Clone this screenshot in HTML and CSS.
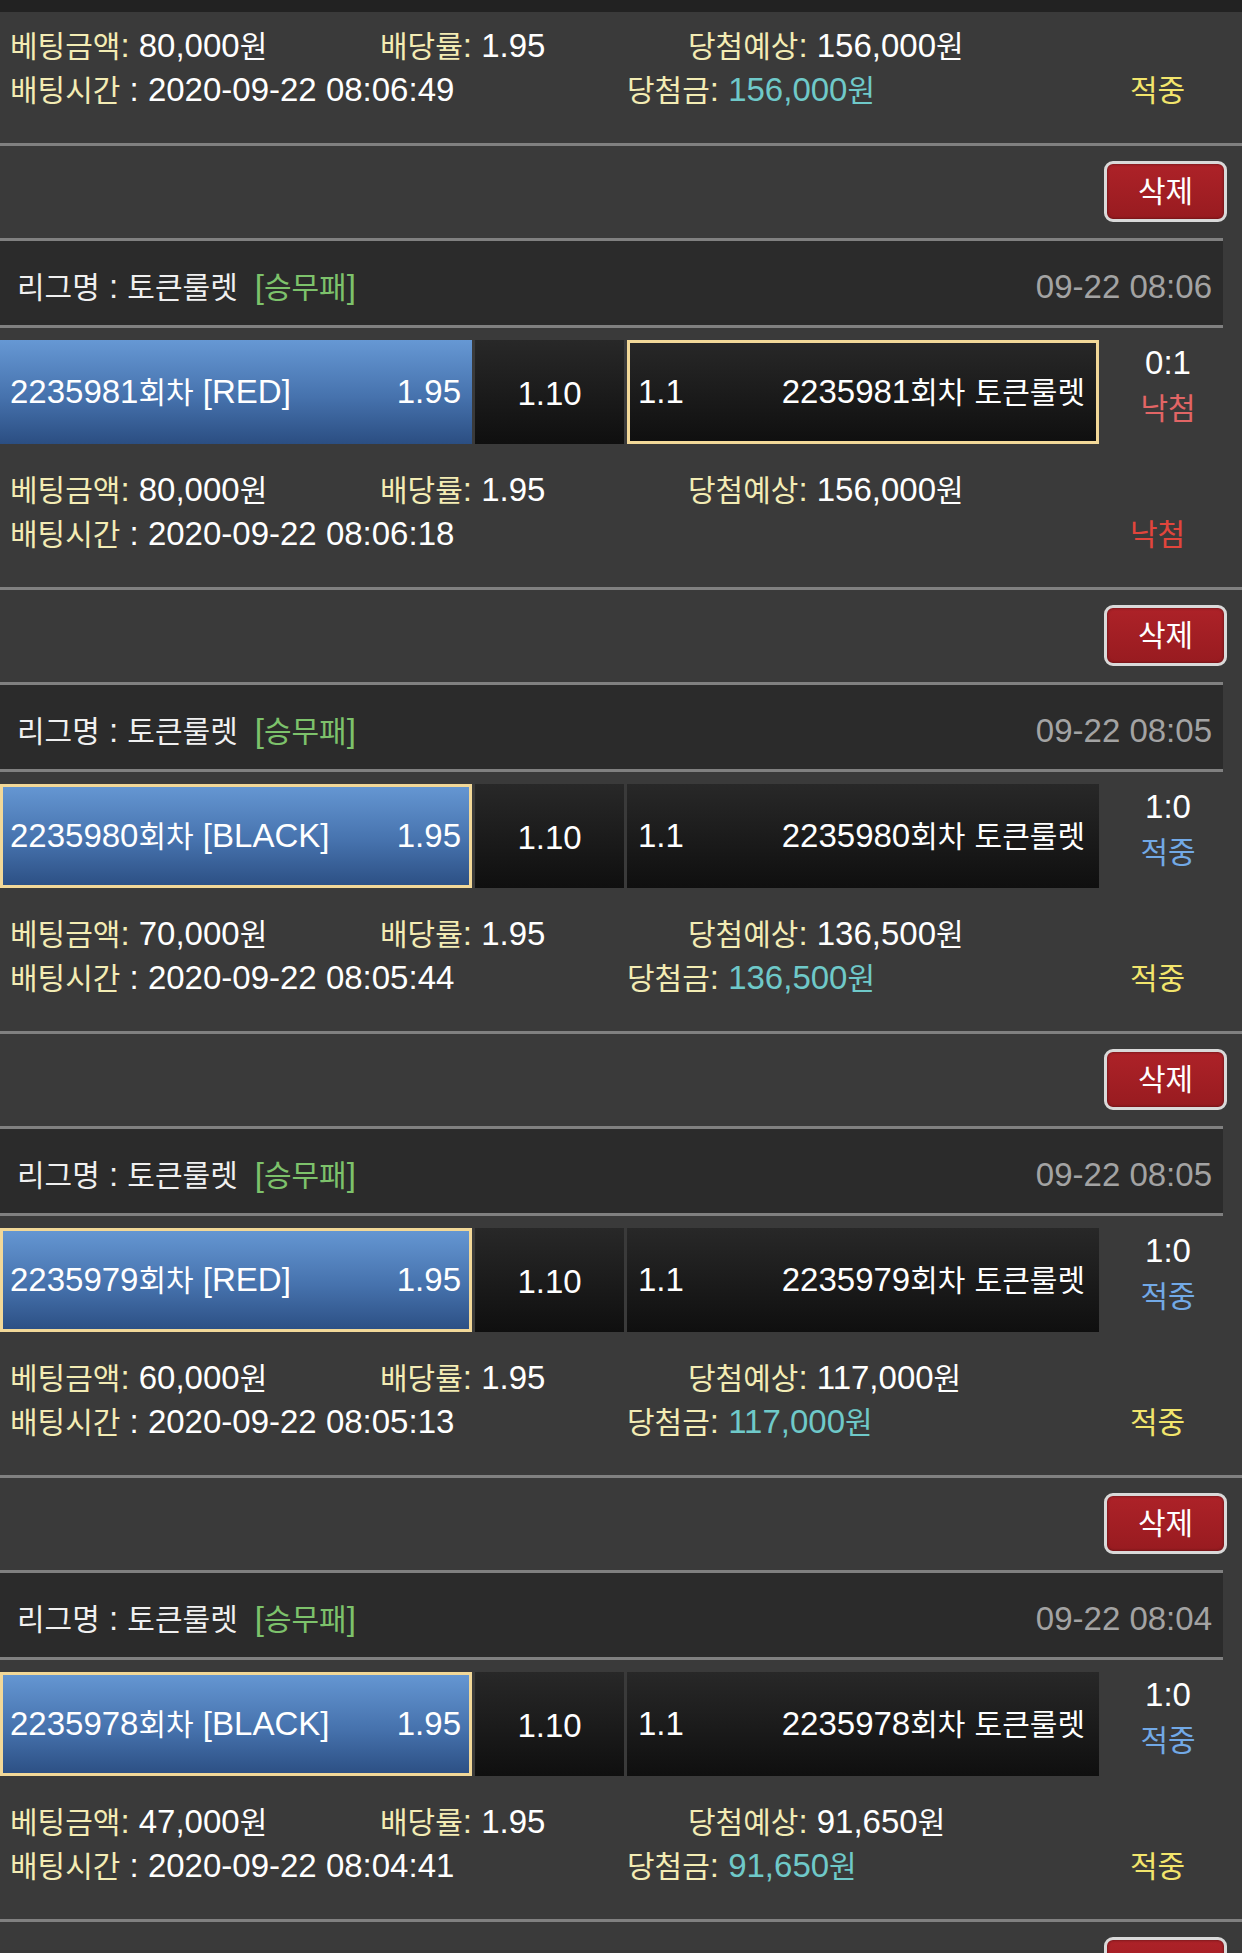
FILE: index.html
```html
<!DOCTYPE html>
<html lang="ko">
<head>
<meta charset="utf-8">
<title>배팅내역</title>
<link rel="stylesheet" href="styles.css">
</head>
<body>
<div class="topbar"></div>

<section class="info info-first">
  <div class="row">
    <div class="c1"><span class="lbl"><span class="k">베팅금액</span>:</span> 80,000<span class="k">원</span></div>
    <div class="c2"><span class="lbl"><span class="k">배당률</span>:</span> 1.95</div>
    <div class="c3"><span class="lbl"><span class="k">당첨예상</span>:</span> 156,000<span class="k">원</span></div>
  </div>
  <div class="row">
    <div class="d1"><span class="lbl"><span class="k">배팅시간</span></span> : 2020-09-22 08:06:49</div>
    <div class="d2"><span class="lbl"><span class="k">당첨금</span>:</span> <span class="win">156,000<span class="k">원</span></span></div>
    <div class="d3"><span class="k st-hit">적중</span></div>
  </div>
</section>

<article class="entry">
  <div class="actions"><button class="del"><span class="k">삭제</span></button></div>
  <div class="league">
    <div class="league-name"><span class="k">리그명</span> : <span class="k">토큰룰렛</span><span class="type">[<span class="k">승무패</span>]</span></div>
    <div class="league-date">09-22 08:06</div>
  </div>
  <div class="bet">
    <div class="pick home"><span>2235981<span class="k">회차</span> [RED]</span><span>1.95</span></div>
    <div class="pick draw">1.10</div>
    <div class="pick away selected"><span>1.1</span><span>2235981<span class="k">회차</span> <span class="k">토큰룰렛</span></span></div>
    <div class="score"><div>0:1</div><div class="k sc-lose">낙첨</div></div>
  </div>
  <div class="info">
    <div class="row">
      <div class="c1"><span class="lbl"><span class="k">베팅금액</span>:</span> 80,000<span class="k">원</span></div>
      <div class="c2"><span class="lbl"><span class="k">배당률</span>:</span> 1.95</div>
      <div class="c3"><span class="lbl"><span class="k">당첨예상</span>:</span> 156,000<span class="k">원</span></div>
    </div>
    <div class="row">
      <div class="d1"><span class="lbl"><span class="k">배팅시간</span></span> : 2020-09-22 08:06:18</div>
      <div class="d2"></div>
      <div class="d3"><span class="k st-lose">낙첨</span></div>
    </div>
  </div>
</article>

<article class="entry">
  <div class="actions"><button class="del"><span class="k">삭제</span></button></div>
  <div class="league">
    <div class="league-name"><span class="k">리그명</span> : <span class="k">토큰룰렛</span><span class="type">[<span class="k">승무패</span>]</span></div>
    <div class="league-date">09-22 08:05</div>
  </div>
  <div class="bet">
    <div class="pick home selected"><span>2235980<span class="k">회차</span> [BLACK]</span><span>1.95</span></div>
    <div class="pick draw">1.10</div>
    <div class="pick away"><span>1.1</span><span>2235980<span class="k">회차</span> <span class="k">토큰룰렛</span></span></div>
    <div class="score"><div>1:0</div><div class="k sc-hit">적중</div></div>
  </div>
  <div class="info">
    <div class="row">
      <div class="c1"><span class="lbl"><span class="k">베팅금액</span>:</span> 70,000<span class="k">원</span></div>
      <div class="c2"><span class="lbl"><span class="k">배당률</span>:</span> 1.95</div>
      <div class="c3"><span class="lbl"><span class="k">당첨예상</span>:</span> 136,500<span class="k">원</span></div>
    </div>
    <div class="row">
      <div class="d1"><span class="lbl"><span class="k">배팅시간</span></span> : 2020-09-22 08:05:44</div>
      <div class="d2"><span class="lbl"><span class="k">당첨금</span>:</span> <span class="win">136,500<span class="k">원</span></span></div>
      <div class="d3"><span class="k st-hit">적중</span></div>
    </div>
  </div>
</article>

<article class="entry">
  <div class="actions"><button class="del"><span class="k">삭제</span></button></div>
  <div class="league">
    <div class="league-name"><span class="k">리그명</span> : <span class="k">토큰룰렛</span><span class="type">[<span class="k">승무패</span>]</span></div>
    <div class="league-date">09-22 08:05</div>
  </div>
  <div class="bet">
    <div class="pick home selected"><span>2235979<span class="k">회차</span> [RED]</span><span>1.95</span></div>
    <div class="pick draw">1.10</div>
    <div class="pick away"><span>1.1</span><span>2235979<span class="k">회차</span> <span class="k">토큰룰렛</span></span></div>
    <div class="score"><div>1:0</div><div class="k sc-hit">적중</div></div>
  </div>
  <div class="info">
    <div class="row">
      <div class="c1"><span class="lbl"><span class="k">베팅금액</span>:</span> 60,000<span class="k">원</span></div>
      <div class="c2"><span class="lbl"><span class="k">배당률</span>:</span> 1.95</div>
      <div class="c3"><span class="lbl"><span class="k">당첨예상</span>:</span> 117,000<span class="k">원</span></div>
    </div>
    <div class="row">
      <div class="d1"><span class="lbl"><span class="k">배팅시간</span></span> : 2020-09-22 08:05:13</div>
      <div class="d2"><span class="lbl"><span class="k">당첨금</span>:</span> <span class="win">117,000<span class="k">원</span></span></div>
      <div class="d3"><span class="k st-hit">적중</span></div>
    </div>
  </div>
</article>

<article class="entry">
  <div class="actions"><button class="del"><span class="k">삭제</span></button></div>
  <div class="league">
    <div class="league-name"><span class="k">리그명</span> : <span class="k">토큰룰렛</span><span class="type">[<span class="k">승무패</span>]</span></div>
    <div class="league-date">09-22 08:04</div>
  </div>
  <div class="bet">
    <div class="pick home selected"><span>2235978<span class="k">회차</span> [BLACK]</span><span>1.95</span></div>
    <div class="pick draw">1.10</div>
    <div class="pick away"><span>1.1</span><span>2235978<span class="k">회차</span> <span class="k">토큰룰렛</span></span></div>
    <div class="score"><div>1:0</div><div class="k sc-hit">적중</div></div>
  </div>
  <div class="info">
    <div class="row">
      <div class="c1"><span class="lbl"><span class="k">베팅금액</span>:</span> 47,000<span class="k">원</span></div>
      <div class="c2"><span class="lbl"><span class="k">배당률</span>:</span> 1.95</div>
      <div class="c3"><span class="lbl"><span class="k">당첨예상</span>:</span> 91,650<span class="k">원</span></div>
    </div>
    <div class="row">
      <div class="d1"><span class="lbl"><span class="k">배팅시간</span></span> : 2020-09-22 08:04:41</div>
      <div class="d2"><span class="lbl"><span class="k">당첨금</span>:</span> <span class="win">91,650<span class="k">원</span></span></div>
      <div class="d3"><span class="k st-hit">적중</span></div>
    </div>
  </div>
</article>

<article class="entry">
  <div class="actions"><button class="del"><span class="k">삭제</span></button></div>
</article>
</body>
</html>
```

FILE: styles.css
```css
* { box-sizing: border-box; }

html, body {
  margin: 0;
  padding: 0;
}

body {
  background: #3a3a3a;
  color: #ffffff;
  font-family: "Liberation Sans", "Noto Sans CJK KR", sans-serif;
  font-size: 33px;
  line-height: 44px;
  overflow: hidden;
}

.k {
  font-size: 30px;
}

.topbar {
  height: 12px;
  background: #222222;
}

/* info block */
.info {
  padding: 24px 0 31px 10px;
}

.info-first {
  padding-top: 12px;
}

.row {
  display: flex;
  height: 44px;
  white-space: nowrap;
}

.c1 { width: 370px; }
.c2 { width: 308px; }
.c3 { flex: 1; }
.d1 { width: 617px; }
.d2 { width: 503px; }
.d3 { flex: 1; }

.lbl { color: #f3ecb4; }
.win { color: #6fc9c9; }
.st-hit { color: #f2e56c; }
.st-lose { color: #e2453c; }

/* entry */
.entry {
  border-top: 3px solid #808080;
}

.actions {
  height: 92px;
  display: flex;
  justify-content: flex-end;
  align-items: flex-start;
  padding: 15px 15px 0 0;
}

.del {
  width: 123px;
  height: 61px;
  margin: 0;
  padding: 0;
  border: 3px solid #d9d9d9;
  border-radius: 9px;
  background: linear-gradient(#ad2228, #981b20);
  box-shadow: inset 0 0 3px rgba(0, 0, 0, 0.5);
  color: #ffffff;
  font-family: inherit;
  line-height: 1;
  display: flex;
  align-items: center;
  justify-content: center;
}

.league {
  width: 1223px;
  height: 90px;
  border-top: 3px solid #808080;
  border-bottom: 3px solid #808080;
  background: #2b2b2b;
  display: flex;
  align-items: center;
  justify-content: space-between;
  padding: 8px 11px 0 17px;
  white-space: nowrap;
}

.league-name { color: #f0f0f0; }

.type {
  color: #7dc26b;
  margin-left: 17px;
}

.league-date { color: #a3a3a3; }

/* bet row */
.bet {
  margin-top: 12px;
  height: 104px;
  display: flex;
  gap: 3px;
  white-space: nowrap;
}

.pick {
  height: 104px;
  border: 3px solid transparent;
  background-origin: border-box;
  display: flex;
  align-items: center;
}

.home {
  width: 472px;
  justify-content: space-between;
  padding: 0 8px 0 7px;
  background-image: linear-gradient(#6698d4, #4672ad 55%, #2b4e82);
}

.draw {
  width: 149px;
  justify-content: center;
  padding-top: 4px;
  background-image: linear-gradient(#282828, #0f0f0f);
}

.away {
  width: 472px;
  justify-content: space-between;
  padding: 0 11px 0 8px;
  background-image: linear-gradient(#282828, #0f0f0f);
}

.selected {
  border-color: #f2d898;
}

.score {
  flex: 1;
  padding-right: 8px;
  text-align: center;
  line-height: 46px;
}

.sc-hit { color: #72a9e6; }
.sc-lose { color: #e26565; }
```
